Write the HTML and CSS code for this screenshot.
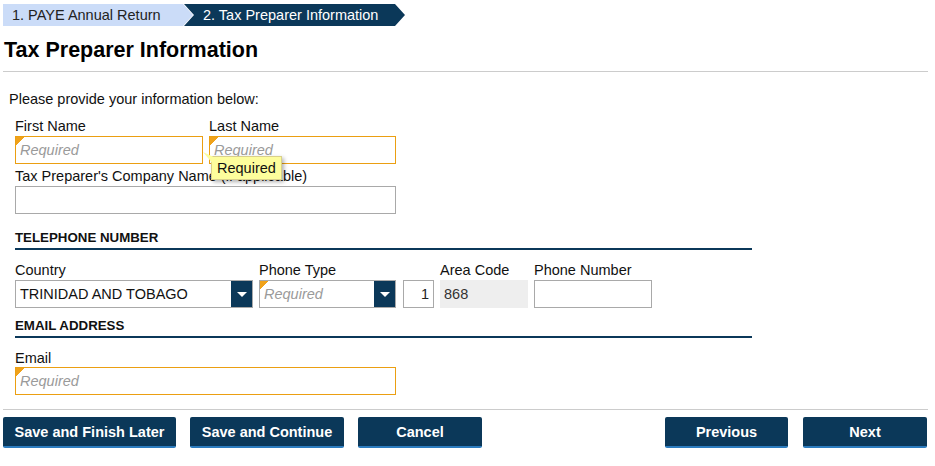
FILE: index.html
```html
<!DOCTYPE html>
<html lang="en">
<head>
  <meta charset="UTF-8" />
  <title>Tax Preparer Information</title>
  <link rel="stylesheet" href="styles.css">
</head>
<body>
  <ol class="steps">
    <li class="step done">1. PAYE Annual Return</li>
    <li class="step current">2. Tax Preparer Information</li>
  </ol>

  <h1>Tax Preparer Information</h1>
  <hr />

  <div class="content">
    <p class="intro">Please provide your information below:</p>

    <div class="fields">
      <div class="row">
        <div class="field w-first">
          <label>First Name</label>
          <input type="text" class="req" placeholder="Required" />
          <div class="tip">Required</div>
        </div>
        <div class="field w-last">
          <label>Last Name</label>
          <input type="text" class="req" placeholder="Required" />
        </div>
      </div>

      <div class="row">
        <div class="field w-wide">
          <label>Tax Preparer's Company Name (if applicable)</label>
          <input type="text" />
        </div>
      </div>

      <h2 class="section">TELEPHONE NUMBER</h2>

      <div class="row phone">
        <div class="field w-country">
          <label>Country</label>
          <div class="select">
            <span class="value">TRINIDAD AND TOBAGO</span>
            <span class="arrow"></span>
          </div>
        </div>
        <div class="field w-type">
          <label>Phone Type</label>
          <div class="select req">
            <span class="value placeholder">Required</span>
            <span class="arrow"></span>
          </div>
        </div>
        <div class="field w-code">
          <label>&nbsp;</label>
          <input type="text" class="num" value="1" />
        </div>
        <div class="field w-area">
          <label>Area Code</label>
          <div class="readonly">868</div>
        </div>
        <div class="field w-phone">
          <label>Phone Number</label>
          <input type="text" />
        </div>
      </div>

      <h2 class="section">EMAIL ADDRESS</h2>

      <div class="row email">
        <div class="field w-wide">
          <label>Email</label>
          <input type="text" class="req" placeholder="Required" />
        </div>
      </div>
    </div>
  </div>

  <hr class="bottom" />

  <div class="actions">
    <div class="group">
      <button class="b-later">Save and Finish Later</button>
      <button class="b-cont">Save and Continue</button>
      <button class="b-cancel">Cancel</button>
    </div>
    <div class="group nav">
      <button class="b-prev">Previous</button>
      <button class="b-next">Next</button>
    </div>
  </div>
</body>
</html>
```

FILE: styles.css
```css
body {
  font-family: 'Liberation Sans', Arial, sans-serif;
  font-size: 14.5px;
  color: #111;
  margin: 0;
  padding: 0;
  background: white;
}
.steps {
  display: flex;
  list-style: none;
  margin: 4px 0 0 3px;
  padding: 0;
}
.step {
  height: 22px;
  line-height: 22px;
  font-size: 14.5px;
}
.step.done {
  width: 181px;
  padding-left: 9px;
  background: #cbdcf8;
  color: #222;
  clip-path: polygon(0 0, calc(100% - 10px) 0, 100% 50%, calc(100% - 10px) 100%, 0 100%);
}
.step.current {
  width: 202px;
  margin-left: -9px;
  padding-left: 19px;
  background: #0b3859;
  color: white;
  clip-path: polygon(0 0, calc(100% - 10px) 0, 100% 50%, calc(100% - 10px) 100%, 0 100%, 10px 50%);
}
h1 {
  font-size: 21.5px;
  font-weight: bold;
  margin: 12px 0 0 4px;
  line-height: 24px;
  color: #000;
}
hr {
  border: none;
  border-top: 1px solid #cccccc;
  margin: 9px 7px 0 3px;
}
.content {
  padding: 0 9px;
}
.intro {
  margin: 19px 0 0;
  line-height: 16px;
}
.fields {
  padding-left: 6px;
}
.row {
  display: flex;
  gap: 6px;
}
.field {
  position: relative;
  display: flex;
  flex-direction: column;
}
.field label {
  line-height: 16px;
  margin: 4px 0 2px;
}
.intro + .fields .row:first-child label {
  margin-top: 11px;
}
.phone label {
  margin-top: 12px;
}
.email label {
  margin-top: 12px;
  margin-bottom: 1px;
}
.w-first { width: 188px; }
.w-last { width: 187px; }
.w-wide { width: 381px; }
.w-country { width: 238px; }
.w-type { width: 137px; margin-right: 1px; }
.w-code { width: 31px; }
.w-area { width: 88px; }
.w-phone { width: 118px; }
input {
  height: 28px;
  box-sizing: border-box;
  border: 1px solid #a9a9a9;
  padding: 0 4px;
  font-family: inherit;
  font-size: 14.5px;
  color: #222;
  width: 100%;
  margin: 0;
}
input::placeholder {
  color: #9a9a9a;
  font-style: italic;
}
.req {
  border-color: #eb9f12;
  background-image: linear-gradient(135deg, #f0a21a 6px, transparent 6px);
  background-repeat: no-repeat;
}
input.num {
  text-align: right;
}
.select {
  display: flex;
  height: 28px;
  box-sizing: border-box;
  border: 1px solid #a9a9a9;
}
.select .value {
  flex: 1;
  line-height: 26px;
  padding-left: 4px;
  color: #111;
}
.select .placeholder {
  color: #9a9a9a;
  font-style: italic;
}
.select .arrow {
  width: 21px;
  background: #0b3859;
  position: relative;
}
.select .arrow::after {
  content: "";
  position: absolute;
  left: 6px;
  top: 11px;
  border-left: 5px solid transparent;
  border-right: 5px solid transparent;
  border-top: 5px solid white;
}
.readonly {
  height: 28px;
  line-height: 28px;
  background: #eeeeee;
  padding-left: 4px;
  color: #333;
}
.section {
  font-size: 13.3px;
  font-weight: bold;
  margin: 17px 0 0;
  width: 737px;
  line-height: 14px;
  padding-bottom: 3px;
  border-bottom: 2px solid #0b3859;
  color: #111;
}
.phone + .section {
  margin-top: 11px;
}
.tip {
  position: absolute;
  left: 196px;
  top: 49px;
  padding: 3px 5px 3px 5px;
  background: #fdfd9c;
  border: 1px solid #d9d08a;
  box-shadow: 2px 2px 4px rgba(0, 0, 0, 0.3);
  line-height: 16px;
  color: #111;
  z-index: 2;
}
.tip::before {
  content: "";
  position: absolute;
  left: -9px;
  top: -5px;
  width: 10px;
  height: 12px;
  background: #fdfd9c;
  clip-path: polygon(0 0, 100% 40%, 100% 100%);
}
hr.bottom {
  margin-top: 14px;
}
.actions {
  display: flex;
  justify-content: space-between;
  padding: 7px 8px 0 3px;
}
.group {
  display: flex;
  gap: 14px;
}
.group.nav {
  gap: 15px;
}
button {
  height: 31px;
  background: #0b3859;
  color: white;
  border: none;
  border-bottom: 2px solid #2c7cbf;
  border-radius: 2px;
  font-family: inherit;
  font-size: 14.5px;
  font-weight: bold;
  padding: 0;
}
.b-later { width: 173px; }
.b-cont { width: 154px; }
.b-cancel { width: 124px; }
.b-prev { width: 123px; }
.b-next { width: 124px; }
```
